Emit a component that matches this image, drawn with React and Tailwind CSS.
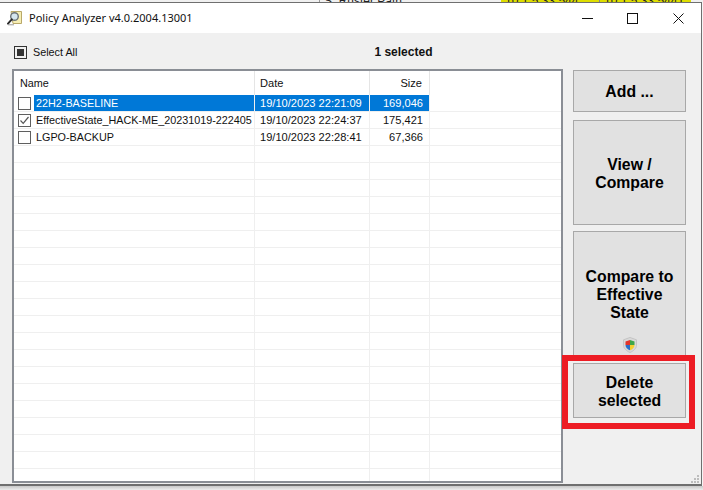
const ARIAL = "font-['Liberation_Sans',Arial,sans-serif]";

const items = [
  { name: "22H2-BASELINE", date: "19/10/2023 22:21:09", size: "169,046", selected: true },
  { name: "EffectiveState_HACK-ME_20231019-222405", date: "19/10/2023 22:24:37", size: "175,421", checked: true },
  { name: "LGPO-BACKUP", date: "19/10/2023 22:28:41", size: "67,366" },
];

function AppIcon() {
  return (
    <svg width="16" height="16" viewBox="0 0 16 16" className="shrink-0">
      <path d="M4 1.500h10.500v12H6z" fill="#f6eeb4" stroke="#b9a869" strokeWidth="1" />
      <circle cx="7.500" cy="6.500" r="3.800" fill="#d5e6ef" stroke="#6d7478" strokeWidth="1.400" />
      <path d="M4.800 9.400 1 13.600" stroke="#2b2b2b" strokeWidth="2" strokeLinecap="round" />
      <path d="M1 14.800h6" stroke="#999" strokeWidth="1" />
    </svg>
  );
}

function Shield() {
  return (
    <svg width="15" height="16" viewBox="0 0 15 16">
      <path d="M7.500.5 14 2.800v5.400c0 3.300-3 5.800-6.500 7.300C4 14 1 11.500 1 8.200V2.800z" fill="#d8d8d8" stroke="#c4c4c4" strokeWidth="1" />
      <path d="M7.500 3 3 4.400V8h4.500z" fill="#e2352b" />
      <path d="M7.500 3 12 4.400V8H7.500z" fill="#3fa648" />
      <path d="M3 8h4.500v5.300C5 12.300 3 10.500 3 8z" fill="#2a6fc9" />
      <path d="M12 8H7.500v5.300C10 12.300 12 10.500 12 8z" fill="#f4cf2e" />
    </svg>
  );
}

function Check({ checked }) {
  return (
    <span className="flex h-[13px] w-[13px] shrink-0 items-center justify-center border border-[#5f5f5f] bg-white">
      {checked && (
        <svg width="11" height="11" viewBox="0 0 11 11">
          <path d="M1.500 5.500 4.200 8.300 9.500 2" fill="none" stroke="#555" strokeWidth="1.200" />
        </svg>
      )}
    </span>
  );
}

function Row({ item }) {
  const sel = item?.selected;
  const text = sel ? "bg-[#0078d7] text-white" : "text-[#111]";
  return (
    <div className="flex h-[17px] shrink-0 border-b border-[#efefef]">
      <div className="flex w-[241px] shrink-0 items-center border-r border-[#efefef] pl-[4px]">
        {item && (
          <>
            <Check checked={item.checked} />
            <span className={`ml-[3px] flex h-[16px] flex-1 items-center whitespace-nowrap pl-[2px] text-[10.800px] ${text}`}>{item.name}</span>
          </>
        )}
      </div>
      <div className={`flex w-[115px] shrink-0 items-center whitespace-nowrap border-r border-[#efefef] pl-[5px] ${item ? text : ""}`}>
        {item?.date}
      </div>
      <div className={`flex w-[60px] shrink-0 items-center justify-end border-r border-[#efefef] pr-[6px] ${item ? text : ""}`}>
        {item?.size}
      </div>
    </div>
  );
}

function Btn({ className, children }) {
  return (
    <button className={`relative flex w-[113px] shrink-0 flex-col items-center justify-center border-[1.500px] border-[#a8a8a8] bg-[#e1e1e1] pt-[2px] text-[15.800px] font-bold leading-[18px] text-black ${className}`}>
      {children}
    </button>
  );
}

export default function App() {
  const blanks = Array.from({ length: 20 });
  return (
    <div className={`flex h-[490px] w-[703px] flex-col overflow-hidden bg-[#f4f4f4] ${ARIAL}`}>
      {/* sliver of the window behind */}
      <div className="flex h-[2px] shrink-0 overflow-hidden bg-[#f0f0f0] text-[12px] leading-[2px] text-[#222]">
        <div className="w-[320px] shrink-0 border-r border-[#999]" />
        <div className="w-[181px] shrink-0 pl-[4px]">S: Ruster Path</div>
        <div className="w-[99px] shrink-0 border-r border-[#888] bg-[#dede00] pl-[4px]">10.1.5.33:544</div>
        <div className="w-[91px] shrink-0 bg-[#dede00] pl-[4px]">10.1.5.33:5441</div>
      </div>

      {/* window */}
      <div className="flex w-[702px] flex-1 flex-col border-r border-t border-b-2 border-[#6f6f6f] bg-[#f0f0f0]">
        <div className="flex h-[30px] shrink-0 items-center bg-white pl-[7px]">
          <AppIcon />
          <span className="ml-[6px] font-['Noto_Sans',sans-serif] text-[11px] text-[#111]">Policy Analyzer v4.0.2004.13001</span>
          <div className="ml-auto flex items-center pr-[17px]">
            <svg width="11" height="11" viewBox="0 0 11 11" className="mr-[34px]">
              <path d="M0 5.500h11" stroke="#111" strokeWidth="1" />
            </svg>
            <svg width="11" height="11" viewBox="0 0 11 11" className="mr-[35px]">
              <rect x=".5" y=".5" width="10" height="10" fill="none" stroke="#111" />
            </svg>
            <svg width="11" height="11" viewBox="0 0 11 11">
              <path d="M.5.500l10 10M10.500.500l-10 10" stroke="#111" strokeWidth="1" />
            </svg>
          </div>
        </div>

        <div className="relative flex min-h-0 flex-1 flex-col">
          <div className="flex h-[36px] shrink-0 items-center pt-[3px] text-[10.800px] text-[#111]">
            <span className="ml-[14px] flex h-[13px] w-[13px] items-center justify-center border border-[#333]">
              <span className="h-[7px] w-[7px] bg-[#333]" />
            </span>
            <span className="ml-[6px]">Select All</span>
            <span className="ml-[297px] -translate-y-[1px] text-[12px] font-bold">1 selected</span>
          </div>

          <div className="flex min-h-0 flex-1 pl-[12px]">
            <div className="flex h-[414px] w-[551px] shrink-0 flex-col overflow-hidden border-2 border-[#8a8e95] bg-white text-[11.100px]">
              <div className="flex h-[24px] shrink-0 items-center text-[#111]">
                <div className="flex h-full w-[241px] shrink-0 items-center border-r border-[#e5e5e5] pl-[6px] text-[10.800px]">Name</div>
                <div className="flex h-full w-[115px] shrink-0 items-center border-r border-[#e5e5e5] pl-[5px]">Date</div>
                <div className="flex h-full w-[60px] shrink-0 items-center justify-end border-r border-[#e5e5e5] pr-[7px]">Size</div>
              </div>
              {items.map((it) => <Row key={it.name} item={it} />)}
              {blanks.map((_, i) => <Row key={i} />)}
            </div>

            <div className="ml-[10px] flex flex-col pt-[1px]">
              <Btn className="h-[42px]">Add ...</Btn>
              <Btn className="mt-[8px] h-[105px]">View /<br />Compare</Btn>
              <Btn className="mt-[6px] h-[126px]">
                Compare to<br />Effective<br />State
                <span className="absolute bottom-[3px] left-1/2 -translate-x-1/2"><Shield /></span>
              </Btn>
              <Btn className="mt-[6px] h-[55px]">Delete<br />selected</Btn>
            </div>
          </div>

          {/* red annotation */}
          <div className="pointer-events-none absolute left-[562px] top-[322px] h-[74px] w-[133px] border-[6px] border-[#ed1c24]" />

          {/* size grip */}
          <div className="absolute bottom-[1px] right-[2px] grid grid-cols-3 gap-px">
            {[0, 0, 1, 0, 1, 1, 1, 1, 1].map((on, i) => (
              <span key={i} className={`h-[2px] w-[2px] ${on ? "bg-[#bdbdbd]" : ""}`} />
            ))}
          </div>
        </div>
      </div>

      {/* drop shadow */}
      <div className="h-[4px] w-full shrink-0 bg-gradient-to-b from-[#c8c8c8] to-[#ececec]" />
    </div>
  );
}
